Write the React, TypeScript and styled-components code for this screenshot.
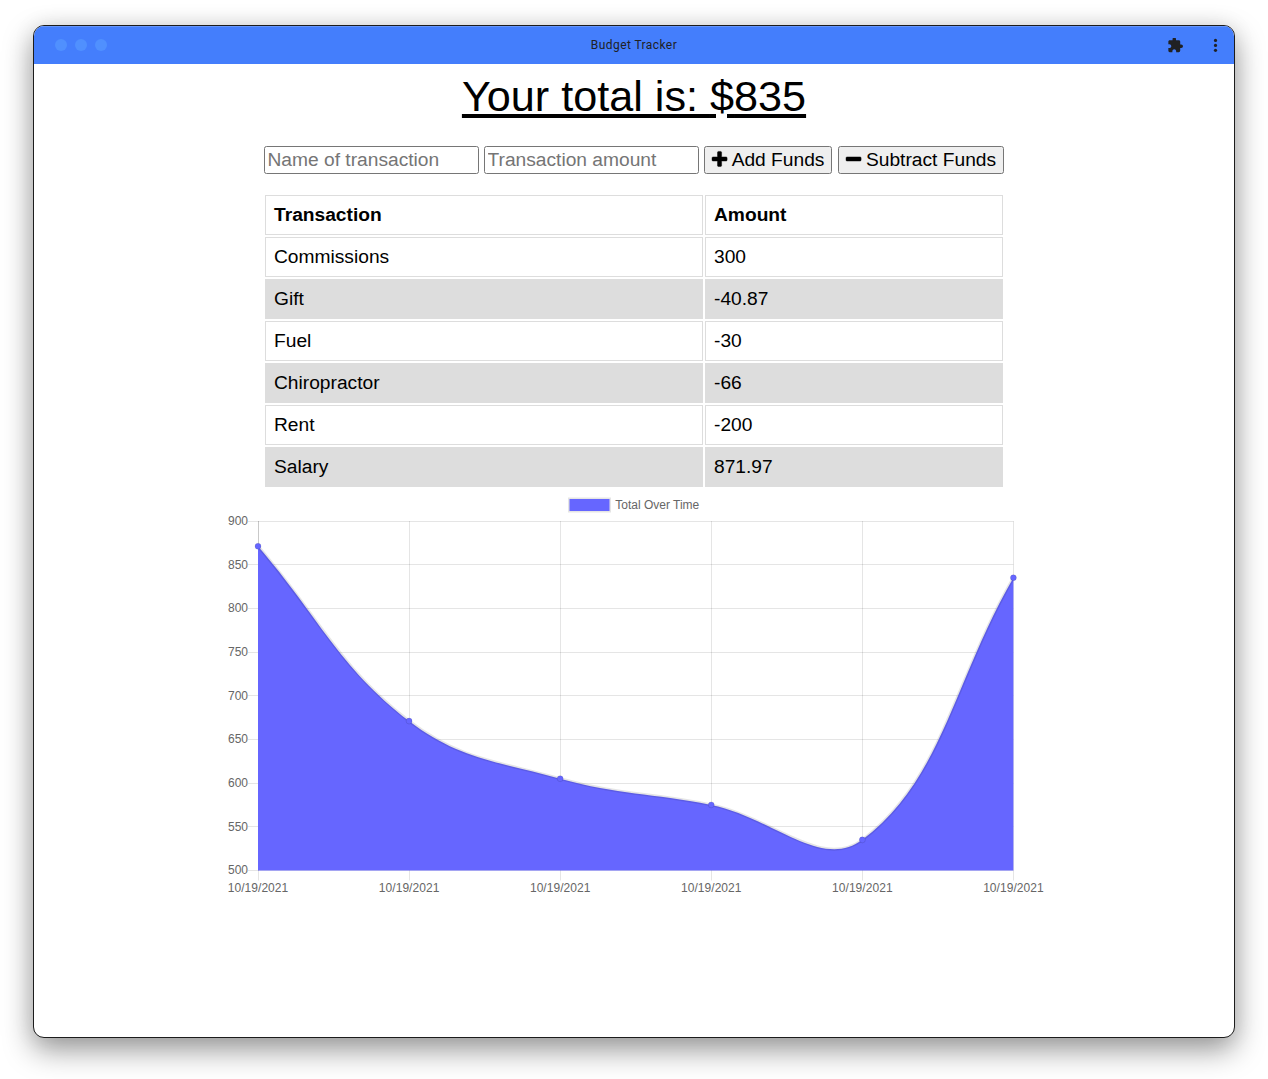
import React from "react";
import styled, { createGlobalStyle, css } from "styled-components";

const GlobalStyle = createGlobalStyle`
  *, *::before, *::after { box-sizing: border-box; }
  body {
    margin: 0;
    background: #fff;
    font-family: "Liberation Sans", Arial, Helvetica, sans-serif;
    color: #000;
  }
`;

const Desktop = styled.div`
  height: 1079px;
  padding: 25px 33px 41px;
  overflow: hidden;
`;

const Window = styled.div`
  height: 1013px;
  border: 1px solid #1c1c1c;
  border-radius: 11px;
  overflow: hidden;
  background: #fff;
  box-shadow: 0 12px 30px rgba(0, 0, 0, 0.4), 0 0 22px rgba(0, 0, 0, 0.08);
`;

const TitleBar = styled.header`
  height: 38px;
  display: grid;
  grid-template-columns: 1fr auto 1fr;
  align-items: center;
  padding: 0 14px;
  background: #447efc;
  box-shadow: inset 0 1px 0 #6596fb;
`;

const Lights = styled.div`
  display: flex;
  gap: 8px;
  padding-left: 7px;
`;

const Light = styled.span`
  width: 12px;
  height: 12px;
  border-radius: 50%;
  background: #5090fe;
`;

const WindowTitle = styled.div`
  font: 12px/16px Roboto, sans-serif;
  letter-spacing: 0.42px;
  color: #202124;
`;

const BarActions = styled.div`
  display: flex;
  justify-content: flex-end;
  align-items: center;
  gap: 27.5px;
  svg { display: block; fill: #202124; }
`;

const Page = styled.main`
  display: flex;
  flex-direction: column;
  align-items: center;
`;

const Total = styled.h1`
  margin: 7px 0 0;
  font-size: 43.2px;
  line-height: 50px;
  height: 50px;
  font-weight: 400;
  text-decoration: underline;
  text-decoration-thickness: 4px;
  text-underline-offset: 3px;
`;

// The underline breaks where the dollar sign's stem crosses it.
const Currency = styled.span`
  display: inline-block;
  background: linear-gradient(
      to right,
      #000 6px,
      transparent 6px,
      transparent 17px,
      #000 17px
    )
    0 43px / 100% 4px no-repeat;
`;

const Form = styled.form`
  display: flex;
  width: 740px;
  margin-top: 25px;
  gap: 5px;
`;

const control = css`
  height: 28px;
  border: 1px solid #767676;
  border-radius: 2.5px;
  font: 19.2px/22px "Liberation Sans", Arial, sans-serif;
  color: #000;
`;

const Field = styled.input`
  ${control}
  width: 215px;
  padding: 1px 2.5px;
  background: #fff;
  &::placeholder { color: #757575; opacity: 1; }
`;

const ActionButton = styled.button<{ $width: number; $offset?: number }>`
  ${control}
  width: ${(p) => p.$width}px;
  margin-left: ${(p) => p.$offset ?? 0}px;
  padding: 0;
  display: flex;
  align-items: center;
  justify-content: center;
  gap: 5px;
  white-space: nowrap;
  background: #efefef;
  svg { flex: none; margin-bottom: 2px; overflow: visible; }
`;

const Ledger = styled.table`
  width: 742px;
  margin-top: 19px;
  border-collapse: separate;
  border-spacing: 2px;
  table-layout: fixed;
  font-size: 19.2px;
  line-height: 22px;
  tbody tr:nth-child(even) { background: #ddd; }
`;

const cell = css`
  height: 40px;
  padding: 8px;
  border: 1px solid #ddd;
  text-align: left;
`;

const HeadCell = styled.th<{ $width?: number }>`
  ${cell}
  width: ${(p) => (p.$width ? `${p.$width}px` : "auto")};
`;

const Cell = styled.td`
  ${cell}
`;

const ChartSvg = styled.svg`
  display: block;
  width: 840px;
  height: 420px;
  text {
    font: 12px "Liberation Sans", Helvetica, Arial, sans-serif;
    fill: #666;
  }
`;

const transactions: [string, string][] = [
  ["Commissions", "300"],
  ["Gift", "-40.87"],
  ["Fuel", "-30"],
  ["Chiropractor", "-66"],
  ["Rent", "-200"],
  ["Salary", "871.97"],
];

const totals = [871.1, 671.1, 605.1, 575.1, 535.1, 835.1];

const plot = { left: 44, right: 799.4, top: 32, bottom: 381.5 };
const ticks = [900, 850, 800, 750, 700, 650, 600, 550, 500];

type Point = { x: number; y: number };

const yOf = (value: number) =>
  plot.bottom - ((value - 500) / 400) * (plot.bottom - plot.top);

const points: Point[] = totals.map((value, i) => ({
  x: plot.left + (i * (plot.right - plot.left)) / (totals.length - 1),
  y: yOf(value),
}));

// Cardinal-like spline: handles are weighted by the distance to each neighbour.
function controls(i: number) {
  const tension = 0.4;
  const cur = points[i];
  const prev = points[i - 1] ?? cur;
  const next = points[i + 1] ?? cur;
  const d01 = Math.hypot(cur.x - prev.x, cur.y - prev.y);
  const d12 = Math.hypot(next.x - cur.x, next.y - cur.y);
  const a = (tension * d01) / (d01 + d12);
  const b = (tension * d12) / (d01 + d12);
  return {
    before: { x: cur.x - a * (next.x - prev.x), y: cur.y - a * (next.y - prev.y) },
    after: { x: cur.x + b * (next.x - prev.x), y: cur.y + b * (next.y - prev.y) },
  };
}

const line = points.reduce((path, p, i) => {
  if (i === 0) return `M${p.x} ${p.y}`;
  const c1 = controls(i - 1).after;
  const c2 = controls(i).before;
  return `${path} C${c1.x} ${c1.y} ${c2.x} ${c2.y} ${p.x} ${p.y}`;
}, "");

function TotalChart() {
  return (
    <ChartSvg viewBox="0 0 840 420">
      <rect x="355.5" y="10" width="40" height="12" fill="none" stroke="rgba(0,0,0,.1)" strokeWidth="3" />
      <rect x="355.5" y="10" width="40" height="12" fill="#66f" />
      <text x="401.3" y="20" textLength="84">Total Over Time</text>
      {ticks.map((tick) => {
        const y = Math.floor(yOf(tick)) + 0.5;
        return (
          <g key={tick}>
            <path d={`M34 ${y}H${plot.right}`} stroke="rgba(0,0,0,.1)" />
            <text x="34" y={Math.round(yOf(tick) - 0.1) + 4} textAnchor="end">{tick}</text>
          </g>
        );
      })}
      {points.map((p, i) => {
        const x = Math.floor(p.x) + 0.5;
        return (
          <g key={i}>
            <path d={`M${x} ${plot.top}V391.5`} stroke="rgba(0,0,0,.1)" />
            {i === 0 && (
              <path d={`M${x} ${plot.top}V${plot.bottom}`} stroke="rgba(0,0,0,.12)" />
            )}
            <text x={p.x} y="403" textAnchor="middle" textLength="60.5">10/19/2021</text>
          </g>
        );
      })}
      <path d={`${line} V${plot.bottom} H${plot.left} Z`} fill="#66f" />
      <path d={line} fill="none" stroke="rgba(0,0,0,.1)" strokeWidth="3" />
      {points.map((p, i) => (
        <circle key={i} cx={p.x} cy={p.y} r="3" fill="#66f" stroke="rgba(0,0,0,.1)" />
      ))}
    </ChartSvg>
  );
}

const PlusIcon = () => (
  <svg width="15.1" height="15.1" viewBox="0 -40 1408 1408">
    <path stroke="#000" strokeWidth="40" d="M1408 608v192q0 40-28 68t-68 28H896v416q0 40-28 68t-68 28H608q-40 0-68-28t-28-68V896H96q-40 0-68-28T0 800V608q0-40 28-68t68-28h416V96q0-40 28-68T608 0h192q40 0 68 28t28 68v416h416q40 0 68 28t28 68z" />
  </svg>
);

const MinusIcon = () => (
  <svg width="15.1" height="15.1" viewBox="0 -40 1408 1408">
    <path stroke="#000" strokeWidth="40" d="M1408 608v192q0 40-28 68t-68 28H96q-40 0-68-28T0 800V608q0-40 28-68t68-28h1216q40 0 68 28t28 68z" />
  </svg>
);

export default function App() {
  return (
    <>
      <GlobalStyle />
      <Desktop>
        <Window>
          <TitleBar>
            <Lights>
              <Light />
              <Light />
              <Light />
            </Lights>
            <WindowTitle>Budget Tracker</WindowTitle>
            <BarActions>
              <svg width="15" height="15" viewBox="1.5 1.7 21.5 21.5">
                <path d="M20.5 11H19V7c0-1.1-.9-2-2-2h-4V3.5a2.5 2.5 0 0 0-5 0V5H4c-1.1 0-1.99.9-1.99 2v3.8H3.5c1.49 0 2.7 1.21 2.7 2.7s-1.21 2.7-2.7 2.7H2V20c0 1.1.9 2 2 2h3.8v-1.5c0-1.49 1.21-2.7 2.7-2.7s2.7 1.21 2.7 2.7V22H17c1.1 0 2-.9 2-2v-4h1.5a2.5 2.5 0 0 0 0-5z" />
              </svg>
              <svg width="10" height="14" viewBox="0 0 10 14">
                <circle cx="5.5" cy="2.4" r="1.6" />
                <circle cx="5.5" cy="7.4" r="1.6" />
                <circle cx="5.5" cy="12.3" r="1.6" />
              </svg>
            </BarActions>
          </TitleBar>
          <Page>
            <Total>
              Your total is: <Currency>$</Currency>835
            </Total>
            <Form onSubmit={(e) => e.preventDefault()}>
              <Field placeholder="Name of transaction" />
              <Field placeholder="Transaction amount" />
              <ActionButton type="button" $width={128}>
                <PlusIcon />
                Add Funds
              </ActionButton>
              <ActionButton type="button" $width={166} $offset={1}>
                <MinusIcon />
                Subtract Funds
              </ActionButton>
            </Form>
            <Ledger>
              <thead>
                <tr>
                  <HeadCell $width={438}>Transaction</HeadCell>
                  <HeadCell>Amount</HeadCell>
                </tr>
              </thead>
              <tbody>
                {transactions.map(([name, amount]) => (
                  <tr key={name}>
                    <Cell>{name}</Cell>
                    <Cell>{amount}</Cell>
                  </tr>
                ))}
              </tbody>
            </Ledger>
            <TotalChart />
          </Page>
        </Window>
      </Desktop>
    </>
  );
}
